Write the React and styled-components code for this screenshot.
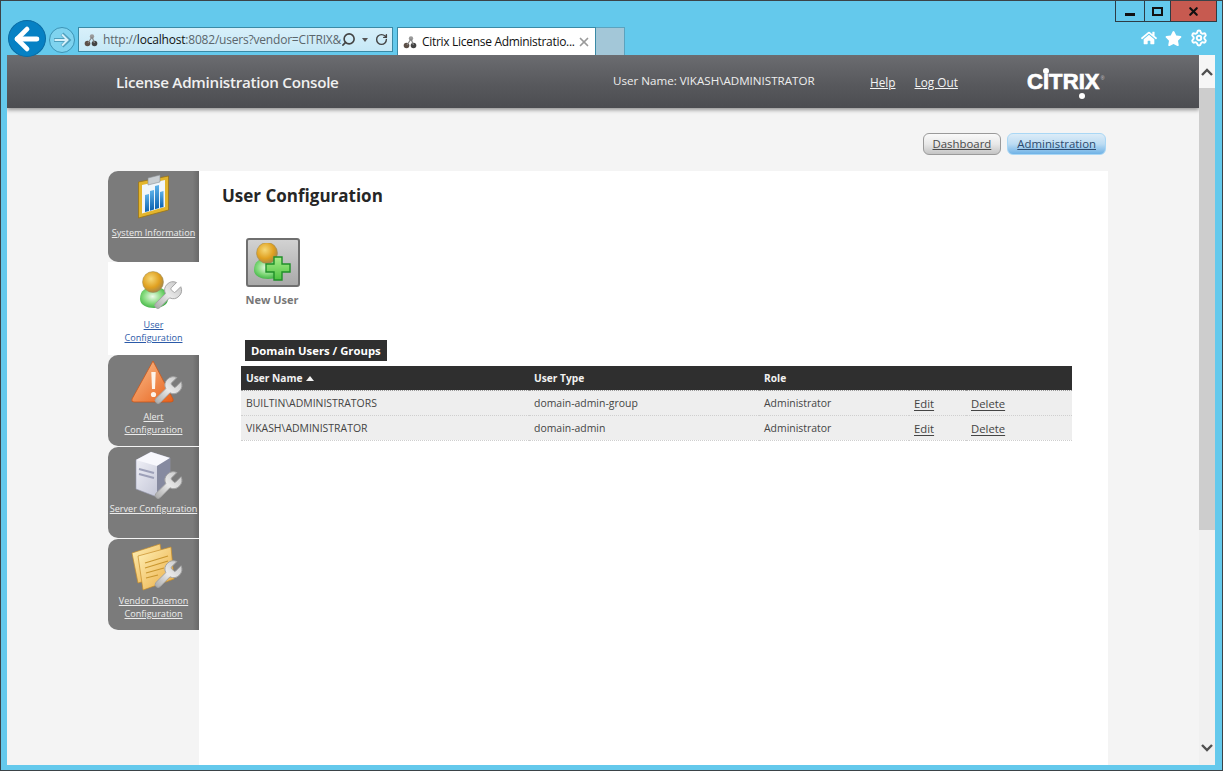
import React from "react";
import styled, { createGlobalStyle } from "styled-components";
import { ArrowLeft, RotateCw, Search, X, Settings } from "lucide-react";
import { FaHome, FaStar } from "react-icons/fa";

const GlobalStyle = createGlobalStyle`
  html, body {
    margin: 0;
    padding: 0;
    overflow: hidden;
    background: #64c9ec;
  }
  * { box-sizing: border-box; }
`;

const uiFont = `"Open Sans", "Noto Sans", "Liberation Sans", sans-serif`;

const Window = styled.div`
  width: 1223px;
  height: 771px;
  display: flex;
  flex-direction: column;
  background: #64c9ec;
  border: 1px solid #3b4348;
  padding: 0 7px 5px 6px;
  font-family: ${uiFont};
  overflow: hidden;
`;

// browser chrome
const Chrome = styled.div`
  height: 54px;
  flex: none;
  display: flex;
  justify-content: space-between;
  position: relative;
  z-index: 2;
`;

const NavGroup = styled.div`
  display: flex;
  align-items: flex-start;
  padding: 19px 0 0 1px;
`;

const BackButton = styled.div`
  width: 38px;
  height: 37px;
  border-radius: 50%;
  background: #0681c4;
  border: 1px solid #0a6ba3;
  display: flex;
  align-items: center;
  justify-content: center;
  color: #fff;
`;

const ForwardButton = styled.div`
  width: 26px;
  height: 26px;
  margin: 7px 3px 0 3px;
  border-radius: 50%;
  border: 1px solid #3d93b5;
  background: #7fd3ef;
  display: flex;
  align-items: center;
  justify-content: center;
`;

const AddressBar = styled.div`
  width: 315px;
  height: 25px;
  margin-top: 7px;
  border: 1px solid #3a8aa6;
  background: linear-gradient(#d8f0fa, #c6e8f6);
  display: flex;
  align-items: center;
  padding: 0 4px 0 5px;
  font-size: 12px;
  letter-spacing: -0.2px;
  color: #5b666c;
  white-space: nowrap;
`;

const AddressText = styled.span`
  flex: 1;
  min-width: 0;
  margin-left: 5px;
  b {
    font-weight: 400;
    color: #111;
  }
`;

const Caret = styled.span`
  width: 0;
  height: 0;
  margin: 0 7px 0 6px;
  border-left: 3.5px solid transparent;
  border-right: 3.5px solid transparent;
  border-top: 4px solid #555;
`;

const Tab = styled.div`
  width: 199px;
  height: 28px;
  margin: 7px 0 0 4px;
  background: #fff;
  border: 1px solid #3a8aa6;
  border-bottom: none;
  display: flex;
  align-items: center;
  padding: 0 4px 0 5px;
  font-size: 12px;
  letter-spacing: -0.3px;
  color: #111;
  white-space: nowrap;
`;

const TabTitle = styled.span`
  flex: 1;
  min-width: 0;
  margin-left: 5px;
`;

const EmptyTab = styled.div`
  width: 29px;
  height: 28px;
  margin-top: 7px;
  background: #a3c7d8;
  border: 1px solid #5ba3bf;
  border-left: none;
  border-bottom: none;
`;

const ChromeRight = styled.div`
  display: flex;
  flex-direction: column;
  align-items: flex-end;
`;

const WindowControls = styled.div`
  display: flex;
  height: 21px;
  margin-right: -2px;
  border: 1px solid #2d3b44;
  border-top: none;
`;

const ControlButton = styled.div`
  width: ${(p) => p.$width}px;
  display: flex;
  align-items: center;
  justify-content: center;
  background: ${(p) => (p.$close ? "#c75a50" : "transparent")};
  border-left: ${(p) => (p.$first ? "none" : "1px solid #2d3b44")};
  color: #111;
`;

const MinGlyph = styled.span`
  width: 10px;
  height: 3px;
  margin-top: 6px;
  background: #111;
`;

const MaxGlyph = styled.span`
  width: 11px;
  height: 9px;
  border: 2px solid #111;
`;

const ToolIcons = styled.div`
  display: flex;
  align-items: center;
  gap: 8px;
  margin: 7px 7px 0 0;
  color: #fff;
`;

// page area
const Page = styled.div`
  flex: 1;
  min-height: 0;
  display: flex;
`;

const PageMain = styled.div`
  width: 1192px;
  display: flex;
  flex-direction: column;
  background: #f4f4f4;
  overflow: hidden;
`;

const TopBar = styled.header`
  height: 53px;
  flex: none;
  display: flex;
  align-items: center;
  background: linear-gradient(#6b6c70, #58595d 55%, #4c4d51);
  box-shadow: 0 2px 4px rgba(0, 0, 0, 0.4);
  color: #fff;
  padding-left: 109px;
`;

const ConsoleTitle = styled.div`
  width: 497px;
  font-size: 15.2px;
  font-weight: 600;
  letter-spacing: -0.27px;
  color: #f0f0f0;
  white-space: nowrap;
`;

const UserName = styled.div`
  width: 257px;
  font-size: 11.6px;
  color: #eee;
  white-space: nowrap;
  margin-top: -2px;
`;

const HeaderLink = styled.a`
  font-size: 11.8px;
  color: #f4f4f4;
  text-decoration: underline;
  margin-right: ${(p) => p.$gap}px;
  cursor: pointer;
`;

const Logo = styled.div`
  display: flex;
  align-items: baseline;
  font-family: "Liberation Sans", sans-serif;
  font-size: 22px;
  font-weight: 700;
  letter-spacing: 0.1px;
  color: #fff;
  -webkit-text-stroke: 0.7px #fff;
  margin-left: 11px;
`;

const LogoDotted = styled.span`
  position: relative;
  &::after {
    content: "";
    position: absolute;
    left: 50%;
    margin-left: -3px;
    width: 6px;
    height: 6px;
    border-radius: 50%;
    background: #fff;
    ${(p) => (p.$below ? "bottom: -4px;" : "top: -1px;")}
  }
`;

const LogoMark = styled.sup`
  font-size: 5px;
  -webkit-text-stroke: 0;
  font-weight: 400;
  align-self: flex-start;
  margin: 7px 0 0 1px;
  line-height: 1;
  color: #ccc;
`;

const ModeRow = styled.nav`
  display: flex;
  justify-content: flex-end;
  gap: 6px;
  padding: 25px 93px 0 0;
  height: 63px;
  flex: none;
`;

const ModeButton = styled.a`
  height: 22px;
  padding: 0 9px 2px;
  display: flex;
  align-items: center;
  font-size: 11.4px;
  text-decoration: underline;
  cursor: pointer;
  border-radius: 6px;
  color: ${(p) => (p.$active ? "#2c4a6e" : "#4a4a4a")};
  border: 1px solid ${(p) => (p.$active ? "#a9d7f5" : "#9a9a9a")};
  background: ${(p) =>
    p.$active
      ? "linear-gradient(#dcecf8, #bcdcf3 50%, #6fb2e6)"
      : "linear-gradient(#fafafa, #e8e8e8 50%, #c4c4c4)"};
`;

const Workspace = styled.div`
  flex: 1;
  min-height: 0;
  display: flex;
  margin-left: 101px;
  width: 1000px;
`;

const SideNav = styled.aside`
  width: 91px;
  flex: none;
  display: flex;
  flex-direction: column;
  align-items: stretch;
`;

const SideTab = styled.a`
  height: ${(p) => p.$height}px;
  margin-bottom: ${(p) => p.$gap || 0}px;
  padding-top: ${(p) => (p.$active ? 1 : 0)}px;
  display: flex;
  flex-direction: column;
  align-items: center;
  border-radius: ${(p) => (p.$active ? "0" : "10px 0 0 10px")};
  background: ${(p) =>
    p.$active ? "#fff" : "linear-gradient(to right, #7b7b7b 93%, #696969)"};
  color: ${(p) => (p.$active ? "#2b5aa8" : "#ececec")};
  font-size: 9.1px;
  line-height: 13px;
  text-align: center;
  cursor: pointer;
`;

const TabIcon = styled.svg`
  width: 60px;
  height: 56px;
  margin-bottom: -1px;
  flex: none;
  display: block;
`;

const TabLabel = styled.span`
  text-decoration: underline;
  white-space: nowrap;
`;

const Card = styled.main`
  flex: 1;
  background: #fff;
  padding: 13px 36px 0 23px;
`;

const PageTitle = styled.h1`
  margin: 0 0 1px;
  font-size: 17px;
  line-height: 24px;
  font-weight: 700;
  color: #262626;
`;

const NewUserBlock = styled.div`
  width: 56px;
  margin: 30px 0 0 23px;
  display: flex;
  flex-direction: column;
  align-items: center;
`;

const NewUserButton = styled.div`
  width: 54px;
  height: 49px;
  border: 2px solid #6f6f6f;
  border-radius: 3px;
  background: linear-gradient(#d2d2d2, #a9a9a9);
  display: flex;
  align-items: center;
  justify-content: center;
`;

const NewUserLabel = styled.div`
  margin: 5px 2px 0 0;
  font-size: 11px;
  font-weight: 700;
  color: #777;
  white-space: nowrap;
`;

const SectionLabel = styled.div`
  display: inline-block;
  margin: 33px 0 0 23px;
  height: 21px;
  padding: 0 6px;
  background: #2f2f2f;
  color: #fff;
  font-size: 11.3px;
  font-weight: 700;
  line-height: 21px;
  white-space: nowrap;
`;

const UsersTable = styled.table`
  display: table;
  width: 831px;
  margin: 5px 0 0 19px;
  border-collapse: collapse;
  table-layout: fixed;
  font-size: 10.45px;
  color: #444;
`;

const HeadCell = styled.th`
  height: 24px;
  padding: 0 0 0 5px;
  background: #2f2f2f;
  color: #f2f2f2;
  font-size: 10.2px;
  font-weight: 700;
  text-align: left;
  border-bottom: 1px dotted #999;
  white-space: nowrap;
`;

const SortArrow = styled.span`
  display: inline-block;
  width: 0;
  height: 0;
  margin: 0 0 1px 1px;
  border-left: 4.5px solid transparent;
  border-right: 4.5px solid transparent;
  border-bottom: 5px solid #f2f2f2;
`;

const Row = styled.tr`
  background: #eeeeee;
`;

const Cell = styled.td`
  height: 25px;
  padding: 0 0 0 5px;
  border-bottom: 1px dotted #cfcfcf;
  white-space: nowrap;
`;

const RowAction = styled.a`
  display: inline-block;
  padding-top: 2px;
  font-size: 11.3px;
  color: #444;
  text-decoration: underline;
  text-underline-offset: 2px;
  cursor: pointer;
`;

const Scrollbar = styled.div`
  width: 16px;
  flex: none;
  display: flex;
  flex-direction: column;
  align-items: center;
  background: #f0f0f0;
  color: #505050;
`;

const ScrollEnd = styled.div`
  height: ${(p) => p.$height}px;
  flex: none;
  width: 100%;
  display: flex;
  align-items: ${(p) => (p.$bottom ? "flex-end" : "center")};
  justify-content: center;
  padding-bottom: ${(p) => (p.$bottom ? 13 : 0)}px;
  background: ${(p) => (p.$bottom ? "#f0f0f0" : "#f6f6f6")};
`;

const ScrollThumb = styled.div`
  width: 100%;
  height: 442px;
  flex: none;
  background: #cdcdcd;
`;

const ScrollSpacer = styled.div`
  flex: 1;
`;

const SharedDefs = styled.svg`
  position: absolute;
  width: 0;
  height: 0;
`;

const Defs = () => (
  <SharedDefs aria-hidden="true">
    <defs>
      <linearGradient id="wrench" x1="0" y1="1" x2="1" y2="0">
        <stop offset="0" stopColor="#a8a8a8" />
        <stop offset="0.5" stopColor="#e9e9e9" />
        <stop offset="1" stopColor="#c4c4c4" />
      </linearGradient>
      <radialGradient id="head" cx="0.4" cy="0.35" r="0.7">
        <stop offset="0" stopColor="#f6d977" />
        <stop offset="0.6" stopColor="#e0a020" />
        <stop offset="1" stopColor="#9c8450" />
      </radialGradient>
      <radialGradient id="body" cx="0.45" cy="0.45" r="0.7">
        <stop offset="0" stopColor="#eefaea" />
        <stop offset="0.5" stopColor="#7ed877" />
        <stop offset="1" stopColor="#1c9a28" />
      </radialGradient>
      <linearGradient id="plus" x1="0" y1="0" x2="0" y2="1">
        <stop offset="0" stopColor="#a8ec8a" />
        <stop offset="1" stopColor="#4cc23f" />
      </linearGradient>
      <linearGradient id="warn" x1="0" y1="0" x2="1" y2="1">
        <stop offset="0" stopColor="#fbc08f" />
        <stop offset="1" stopColor="#e7601a" />
      </linearGradient>
      <linearGradient id="server" x1="0" y1="0" x2="1" y2="1">
        <stop offset="0" stopColor="#f4f4fa" />
        <stop offset="1" stopColor="#b9bccf" />
      </linearGradient>
      <linearGradient id="folder" x1="0" y1="0" x2="1" y2="1">
        <stop offset="0" stopColor="#fff1b8" />
        <stop offset="1" stopColor="#eaaa3e" />
      </linearGradient>
      <linearGradient id="bars" x1="0" y1="0" x2="0" y2="1">
        <stop offset="0" stopColor="#5eb2ea" />
        <stop offset="1" stopColor="#0c62b0" />
      </linearGradient>
    </defs>
  </SharedDefs>
);

const Wrench = ({ x = 26.7, y = 17 }) => (
  <path
    transform={`translate(${x} ${y}) scale(1.4)`}
    d="M14.7 6.3a1 1 0 0 0 0 1.4l1.6 1.6a1 1 0 0 0 1.4 0l3.77-3.77a6 6 0 0 1-7.94 7.94l-6.91 6.91a2.12 2.12 0 0 1-3-3l6.91-6.91a6 6 0 0 1 7.94-7.94l-3.76 3.76z"
    fill="url(#wrench)"
    stroke="#a2a2a2"
    strokeWidth="0.7"
  />
);

// the little grey/brown favicon in the address bar and tab
const PageIcon = () => (
  <svg width="14" height="14" viewBox="0 0 14 14" style={{ flex: "none" }}>
    <circle cx="8" cy="3.5" r="2.2" fill="#9a9a9a" />
    <circle cx="3.5" cy="10.5" r="2.8" fill="#5d5048" />
    <circle cx="10.5" cy="10.5" r="2.8" fill="#444" />
    <path d="M8 4 L4 10 M8 4 L10.5 10" stroke="#888" strokeWidth="1.2" />
  </svg>
);

const ForwardArrow = () => (
  <svg width="20" height="18" viewBox="0 0 20 18">
    <path d="M2 9 H16 M10 3 L16.5 9 L10 15" fill="none" stroke="#4f9fbd" strokeWidth="4" />
    <path d="M2.5 9 H15.5 M10 3.5 L15.5 9 L10 14.5" fill="none" stroke="#d5f0f9" strokeWidth="2" />
  </svg>
);

const SystemIcon = () => (
  <TabIcon viewBox="0 0 60 56">
    <path d="M14.5 11 L44.5 5 L44.5 39 L14.5 47 Z" fill="#e3b52c" stroke="#9a7414" strokeWidth="0.8" />
    <path d="M18 14 L41 9 L41 36 L18 42.5 Z" fill="#f0f6fb" />
    <path d="M21 24 L25 23 L25 40 L21 41 Z" fill="url(#bars)" />
    <path d="M26 20 L30 19 L30 38.5 L26 39.7 Z" fill="url(#bars)" />
    <path d="M31 15 L35 14 L35 37 L31 38.2 Z" fill="url(#bars)" />
    <path d="M36 21 L39.5 20 L39.5 36 L36 36.8 Z" fill="url(#bars)" />
    <path d="M24 7 L36 4 L36 11 L24 14 Z" fill="#c9ced2" stroke="#8b9094" strokeWidth="0.6" />
  </TabIcon>
);

const UserFigure = ({ x = 0, y = 0 }) => (
  <g transform={`translate(${x} ${y})`}>
    <path d="M0 27 C0 18 6 15 14 15 C22 15 28 18 28 27 C28 33 21 36 14 36 C7 36 0 33 0 27 Z" fill="url(#body)" />
    <circle cx="13" cy="10" r="10.5" fill="url(#head)" stroke="#9b8a58" strokeWidth="0.5" />
  </g>
);

const UserConfigIcon = () => (
  <TabIcon viewBox="0 0 60 56">
    <UserFigure x={16} y={9} />
    <Wrench x={26.7} y={16} />
  </TabIcon>
);

const AlertIcon = () => (
  <TabIcon viewBox="0 0 60 56">
    <path d="M29 6 L49 44 Q50 47 47 47 L10 47 Q7 47 8 44 Z" fill="url(#warn)" stroke="#c9571a" strokeWidth="0.8" />
    <path d="M27.3 17 L31.7 17 L31 34 L28 34 Z" fill="#fdf3ea" />
    <circle cx="29.5" cy="39.5" r="2.6" fill="#fdf3ea" />
    <Wrench x={27} y={19} />
  </TabIcon>
);

const ServerIcon = () => (
  <TabIcon viewBox="0 0 60 56">
    <path d="M12 13 L27 5 L46 11 L46 40 L33 50 L12 42 Z" fill="url(#server)" stroke="#9598ae" strokeWidth="0.6" />
    <path d="M12 13 L33 19 L46 11 L27 5 Z" fill="#f8f8fd" />
    <path d="M33 19 L33 50 L46 40 L46 11 Z" fill="#868aa0" />
    <path d="M15 22 L30 26 M15 27 L30 31" stroke="#9da0b8" strokeWidth="2" />
    <Wrench x={27} y={22} />
  </TabIcon>
);

const VendorIcon = () => (
  <TabIcon viewBox="0 0 60 56">
    <path d="M8 14 L36 5 L41 36 L14 44 Z" fill="url(#folder)" stroke="#c68d2a" strokeWidth="0.7" />
    <path d="M14 17 L47 8 L50 40 L19 51 Z" fill="url(#folder)" stroke="#c68d2a" strokeWidth="0.7" />
    <path d="M21 24 L44 17 M21 29 L44 22 M22 34 L40 29 M22 39 L34 36" stroke="#c9962f" strokeWidth="1.2" />
    <Wrench x={27} y={19} />
  </TabIcon>
);

const NewUserIcon = () => (
  <svg width="38" height="40" viewBox="0 0 38 40">
    <UserFigure x={0} y={0} />
    <path
      d="M20 14 h8 v7 h8 v8 h-8 v8 h-8 v-8 h-8 v-8 h8 Z"
      fill="url(#plus)"
      stroke="#1f8f28"
      strokeWidth="1.4"
    />
  </svg>
);

const users = [
  { name: "BUILTIN\\ADMINISTRATORS", type: "domain-admin-group", role: "Administrator" },
  { name: "VIKASH\\ADMINISTRATOR", type: "domain-admin", role: "Administrator" },
];

const App = () => {
  return (
    <>
      <GlobalStyle />
      <Defs />
      <Window>
        <Chrome>
          <NavGroup>
            <BackButton>
              <ArrowLeft size={34} strokeWidth={3.4} />
            </BackButton>
            <ForwardButton>
              <ForwardArrow />
            </ForwardButton>
            <AddressBar>
              <PageIcon />
              <AddressText>
                http://<b>localhost</b>:8082/users?vendor=CITRIX&amp;
              </AddressText>
              <Search size={15} strokeWidth={2.6} color="#444" style={{ transform: "scaleX(-1)" }} />
              <Caret />
              <RotateCw size={13} strokeWidth={2.6} color="#444" />
            </AddressBar>
            <Tab>
              <PageIcon />
              <TabTitle>Citrix License Administratio...</TabTitle>
              <X size={14} strokeWidth={3} color="#9a9a9a" />
            </Tab>
            <EmptyTab />
          </NavGroup>
          <ChromeRight>
            <WindowControls>
              <ControlButton $width={28} $first>
                <MinGlyph />
              </ControlButton>
              <ControlButton $width={26}>
                <MaxGlyph />
              </ControlButton>
              <ControlButton $width={46} $close>
                <X size={13} strokeWidth={4} />
              </ControlButton>
            </WindowControls>
            <ToolIcons>
              <FaHome size={16} />
              <FaStar size={17} />
              <Settings size={18} strokeWidth={2.6} />
            </ToolIcons>
          </ChromeRight>
        </Chrome>
        <Page>
          <PageMain>
            <TopBar>
              <ConsoleTitle>License Administration Console</ConsoleTitle>
              <UserName>User Name: VIKASH\ADMINISTRATOR</UserName>
              <HeaderLink $gap={19}>Help</HeaderLink>
              <HeaderLink $gap={58}>Log Out</HeaderLink>
              <Logo>
                C<LogoDotted>I</LogoDotted>TR<LogoDotted $below>I</LogoDotted>X
                <LogoMark>®</LogoMark>
              </Logo>
            </TopBar>
            <ModeRow>
              <ModeButton>Dashboard</ModeButton>
              <ModeButton $active>Administration</ModeButton>
            </ModeRow>
            <Workspace>
              <SideNav>
                <SideTab $height={91}>
                  <SystemIcon />
                  <TabLabel>System Information</TabLabel>
                </SideTab>
                <SideTab $height={93} $active>
                  <UserConfigIcon />
                  <TabLabel>User</TabLabel>
                  <TabLabel>Configuration</TabLabel>
                </SideTab>
                <SideTab $height={91} $gap={1}>
                  <AlertIcon />
                  <TabLabel>Alert</TabLabel>
                  <TabLabel>Configuration</TabLabel>
                </SideTab>
                <SideTab $height={91} $gap={1}>
                  <ServerIcon />
                  <TabLabel>Server Configuration</TabLabel>
                </SideTab>
                <SideTab $height={91}>
                  <VendorIcon />
                  <TabLabel>Vendor Daemon</TabLabel>
                  <TabLabel>Configuration</TabLabel>
                </SideTab>
              </SideNav>
              <Card>
                <PageTitle>User Configuration</PageTitle>
                <NewUserBlock>
                  <NewUserButton>
                    <NewUserIcon />
                  </NewUserButton>
                  <NewUserLabel>New User</NewUserLabel>
                </NewUserBlock>
                <SectionLabel>Domain Users / Groups</SectionLabel>
                <UsersTable>
                  <colgroup>
                    <col width="288" />
                    <col width="230" />
                    <col width="150" />
                    <col width="57" />
                    <col />
                  </colgroup>
                  <thead>
                    <tr>
                      <HeadCell>
                        User Name <SortArrow />
                      </HeadCell>
                      <HeadCell>User Type</HeadCell>
                      <HeadCell>Role</HeadCell>
                      <HeadCell />
                      <HeadCell />
                    </tr>
                  </thead>
                  <tbody>
                    {users.map((user) => (
                      <Row key={user.name}>
                        <Cell>{user.name}</Cell>
                        <Cell>{user.type}</Cell>
                        <Cell>{user.role}</Cell>
                        <Cell>
                          <RowAction>Edit</RowAction>
                        </Cell>
                        <Cell>
                          <RowAction>Delete</RowAction>
                        </Cell>
                      </Row>
                    ))}
                  </tbody>
                </UsersTable>
              </Card>
            </Workspace>
          </PageMain>
          <Scrollbar>
            <ScrollEnd $height={33}>
              <svg width="12" height="8" viewBox="0 0 12 8">
                <path d="M1 7 L6 2 L11 7" fill="none" stroke="#505050" strokeWidth="2.4" />
              </svg>
            </ScrollEnd>
            <ScrollThumb />
            <ScrollSpacer />
            <ScrollEnd $height={40} $bottom>
              <svg width="12" height="8" viewBox="0 0 12 8">
                <path d="M1 1 L6 6 L11 1" fill="none" stroke="#505050" strokeWidth="2.4" />
              </svg>
            </ScrollEnd>
          </Scrollbar>
        </Page>
      </Window>
    </>
  );
};

export default App;
